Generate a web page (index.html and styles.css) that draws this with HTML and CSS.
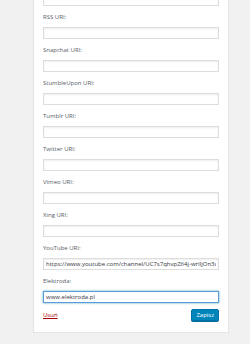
FILE: index.html
```html
<!DOCTYPE html>
<html lang="pl">
<head>
    <meta charset="UTF-8">
    <meta name="viewport" content="width=device-width, initial-scale=1.0">
    <title>Profil - linki</title>
    <link rel="stylesheet" href="styles.css">
</head>
<body>
    <div class="panel">
        <form class="links-form">
            <div class="field">
                <input type="text" id="pinterest" aria-label="Pinterest URI">
            </div>
            <div class="field">
                <label for="rss">RSS URI:</label>
                <input type="text" id="rss">
            </div>
            <div class="field">
                <label for="snapchat">Snapchat URI:</label>
                <input type="text" id="snapchat">
            </div>
            <div class="field">
                <label for="stumbleupon">StumbleUpon URI:</label>
                <input type="text" id="stumbleupon">
            </div>
            <div class="field">
                <label for="tumblr">Tumblr URI:</label>
                <input type="text" id="tumblr">
            </div>
            <div class="field">
                <label for="twitter">Twitter URI:</label>
                <input type="text" id="twitter">
            </div>
            <div class="field">
                <label for="vimeo">Vimeo URI:</label>
                <input type="text" id="vimeo">
            </div>
            <div class="field">
                <label for="xing">Xing URI:</label>
                <input type="text" id="xing">
            </div>
            <div class="field">
                <label for="youtube">YouTube URI:</label>
                <input type="text" id="youtube" value="https://www.youtube.com/channel/UC7s7qhvpZ64j-wrIljOn3uA">
            </div>
            <div class="field">
                <label for="elektroda">Elektroda:</label>
                <input type="text" id="elektroda" class="focused" value="www.elektroda.pl">
            </div>

            <div class="actions">
                <a href="#" class="delete-link">Usuń</a>
                <button type="submit" class="btn-primary">Zapisz</button>
            </div>
        </form>
    </div>
</body>
</html>
```

FILE: styles.css
```css
body {
    margin: 0;
    background-color: #f1f1f1;
    font-family: "Open Sans", "Noto Sans", sans-serif;
    font-size: 6px;
    color: #555d66;
}

.panel {
    box-sizing: border-box;
    width: 196px;
    margin: -17px 0 0 33px;
    padding: 10px 9px 11px;
    background-color: #fff;
    border: 1px solid #e5e5e5;
    box-shadow: 0 1px 1px rgba(0, 0, 0, 0.04);
}

.field {
    margin-bottom: 6px;
}

.field label {
    display: block;
    line-height: 10px;
    margin-bottom: 5px;
}

.field input {
    display: block;
    box-sizing: border-box;
    width: 100%;
    height: 12px;
    margin: 0;
    padding: 0 2px;
    font-family: inherit;
    font-size: 6px;
    color: #32373c;
    background-color: #fff;
    border: 1px solid #ddd;
    box-shadow: inset 0 1px 2px rgba(0, 0, 0, 0.07);
    outline: none;
}

    .field input.focused {
        border-color: #5b9dd9;
        box-shadow: 0 0 2px rgba(30, 140, 190, 0.8);
    }

.actions {
    display: flex;
    justify-content: space-between;
    align-items: center;
}

.delete-link {
    color: #a00;
    text-decoration: underline;
}

.btn-primary {
    height: 12px;
    padding: 0 4px;
    font-family: inherit;
    font-size: 6px;
    line-height: 10px;
    color: #fff;
    background-color: #0085ba;
    border: 1px solid #0073aa;
    border-radius: 2px;
    box-shadow: 0 1px 0 #006799;
    cursor: pointer;
}
```
